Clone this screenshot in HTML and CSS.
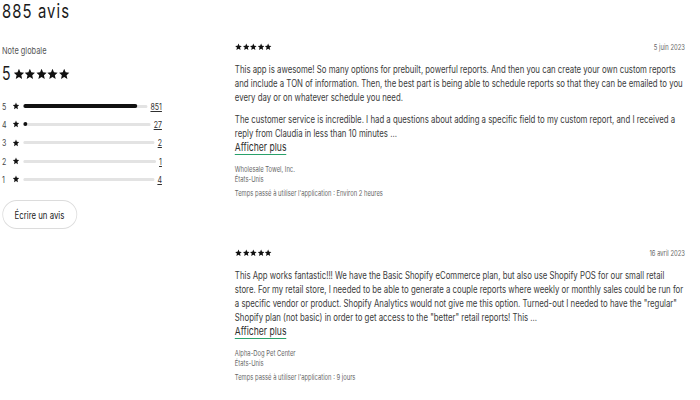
FILE: index.html
```html
<!DOCTYPE html>
<html lang="fr">
<head>
    <meta charset="UTF-8">
    <title>Avis</title>
    <link rel="stylesheet" href="styles.css">
</head>
<body>
    <svg width="0" height="0" class="defs">
        <symbol id="star" viewBox="0 0 24 24" preserveAspectRatio="none">
            <path d="M12 1.5l3.1 7.1 7.7.7-5.8 5.1 1.7 7.6L12 18l-6.7 4 1.7-7.6-5.8-5.1 7.7-.7z"/>
        </symbol>
    </svg>
    <div class="page">
        <h1 class="title">885 avis</h1>
        <div class="reviews-layout">
            <div class="summary">
                <div class="summary-label">Note globale</div>
                <div class="overall">
                    <span class="overall-value">5</span>
                    <span class="stars stars-big">
                        <svg><use href="#star"/></svg><svg><use href="#star"/></svg><svg><use href="#star"/></svg><svg><use href="#star"/></svg><svg><use href="#star"/></svg>
                    </span>
                </div>
                <div class="dist">
                    <div class="dist-row">
                        <span class="dist-num">5</span><svg class="dist-star"><use href="#star"/></svg>
                        <span class="track"><span class="fill" style="width: 92%"></span></span>
                        <a class="dist-count" href="#">851</a>
                    </div>
                    <div class="dist-row">
                        <span class="dist-num">4</span><svg class="dist-star"><use href="#star"/></svg>
                        <span class="track"><span class="fill" style="width: 3%"></span></span>
                        <a class="dist-count" href="#">27</a>
                    </div>
                    <div class="dist-row">
                        <span class="dist-num">3</span><svg class="dist-star"><use href="#star"/></svg>
                        <span class="track"></span>
                        <a class="dist-count" href="#">2</a>
                    </div>
                    <div class="dist-row">
                        <span class="dist-num">2</span><svg class="dist-star"><use href="#star"/></svg>
                        <span class="track"></span>
                        <a class="dist-count" href="#">1</a>
                    </div>
                    <div class="dist-row">
                        <span class="dist-num">1</span><svg class="dist-star"><use href="#star"/></svg>
                        <span class="track"></span>
                        <a class="dist-count" href="#">4</a>
                    </div>
                </div>
                <button class="write-btn">Écrire un avis</button>
            </div>

            <div class="review-list">
                <div class="review">
                    <div class="review-head">
                        <span class="stars">
                            <svg><use href="#star"/></svg><svg><use href="#star"/></svg><svg><use href="#star"/></svg><svg><use href="#star"/></svg><svg><use href="#star"/></svg>
                        </span>
                        <span class="review-date">5 juin 2023</span>
                    </div>
                    <div class="review-body">
                        <p>This app is awesome! So many options for prebuilt, powerful reports. And then you can create your own custom reports and include a TON of information. Then, the best part is being able to schedule reports so that they can be emailed to you every day or on whatever schedule you need.</p>
                        <p>The customer service is incredible. I had a questions about adding a specific field to my custom report, and I received a reply from Claudia in less than 10 minutes ...</p>
                    </div>
                    <a class="more" href="#">Afficher plus</a>
                    <div class="reviewer">
                        <div>Wholesale Towel, Inc.</div>
                        <div>États-Unis</div>
                    </div>
                    <div class="usage">Temps passé à utiliser l'application : Environ 2 heures</div>
                </div>

                <div class="review">
                    <div class="review-head">
                        <span class="stars">
                            <svg><use href="#star"/></svg><svg><use href="#star"/></svg><svg><use href="#star"/></svg><svg><use href="#star"/></svg><svg><use href="#star"/></svg>
                        </span>
                        <span class="review-date">16 avril 2023</span>
                    </div>
                    <div class="review-body">
                        <p>This App works fantastic!!! We have the Basic Shopify eCommerce plan, but also use Shopify POS for our small retail store. For my retail store, I needed to be able to generate a couple reports where weekly or monthly sales could be run for a specific vendor or product. Shopify Analytics would not give me this option. Turned-out I needed to have the "regular" Shopify plan (not basic) in order to get access to the "better" retail reports! This ...</p>
                    </div>
                    <a class="more" href="#">Afficher plus</a>
                    <div class="reviewer">
                        <div>Alpha-Dog Pet Center</div>
                        <div>États-Unis</div>
                    </div>
                    <div class="usage">Temps passé à utiliser l'application : 9 jours</div>
                </div>
            </div>
        </div>
    </div>
</body>
</html>
```

FILE: styles.css
```css
/* the page is laid out ~900px wide and squeezed to the 700px window */
body {
    margin: 0;
    font-family: Inter, sans-serif;
    color: #303030;
    background: #fff;
    overflow: hidden;
}
.defs {
    position: absolute;
}
.page {
    width: 897px;
    box-sizing: border-box;
    padding: 0 19px 0 2.6px;
    transform: scaleX(0.78);
    transform-origin: 0 0;
}
.title {
    margin: 0;
    font-size: 19px;
    font-weight: 400;
    line-height: 24px;
    letter-spacing: 1.4px;
    color: #1a1a1a;
}
.reviews-layout {
    display: flex;
    margin-top: 18px;
}
.summary {
    width: 205px;
    margin-right: 93.5px;
    padding-top: 3px;
}
.summary-label {
    font-size: 9.5px;
    color: #555;
    line-height: 12px;
}
.overall {
    display: flex;
    align-items: center;
    gap: 3px;
    margin-top: 6px;
}
.overall-value {
    font-size: 18px;
    line-height: 22px;
    color: #1a1a1a;
}
.stars {
    display: flex;
    color: #111;
}
.stars svg {
    width: 9.5px;
    height: 7.5px;
    fill: currentColor;
}
.stars-big svg {
    width: 14.6px;
    height: 12px;
}
.dist {
    margin-top: 12px;
}
.dist-row {
    display: flex;
    align-items: center;
    height: 18.3px;
    font-size: 9px;
    color: #444;
}
.dist-num {
    width: 13px;
}
.dist-star {
    width: 9px;
    height: 8px;
    fill: #111;
    margin-right: 5px;
}
.track {
    flex: 1;
    height: 3px;
    border-radius: 2px;
    background: #e3e3e3;
    margin-right: 4px;
    display: flex;
    align-items: center;
}
.fill {
    height: 4px;
    border-radius: 2.5px / 2px;
    background: #111;
    min-width: 5px;
}
.dist-count {
    color: #303030;
    text-decoration: underline;
}
.write-btn {
    margin-top: 12px;
    width: 96px;
    height: 29px;
    padding: 0;
    border: 1px solid #dcdcdc;
    border-radius: 18.6px / 14.5px;
    background: #fff;
    font-family: inherit;
    font-size: 10px;
    color: #1a1a1a;
}
.review-list {
    flex: 1;
}
.review {
    height: 206px;
}
.review-head {
    display: flex;
    justify-content: space-between;
    align-items: center;
    height: 10px;
}
.review-date {
    font-size: 7.5px;
    color: #666;
}
.review-body {
    margin-top: 10px;
    font-size: 10px;
    line-height: 14px;
    color: #3a3a3a;
}
.review-body p {
    margin: 0 0 8px;
}
.review-body p:last-child {
    margin-bottom: 0;
}
.more {
    display: block;
    width: fit-content;
    margin-top: 1px;
    font-size: 11px;
    line-height: 13px;
    color: #303030;
    text-decoration: none;
    border-bottom: 1px solid #29a06a;
}
.reviewer {
    margin-top: 10px;
    font-size: 7.5px;
    line-height: 10px;
    color: #666;
}
.usage {
    margin-top: 4px;
    font-size: 7.5px;
    color: #666;
}
```
